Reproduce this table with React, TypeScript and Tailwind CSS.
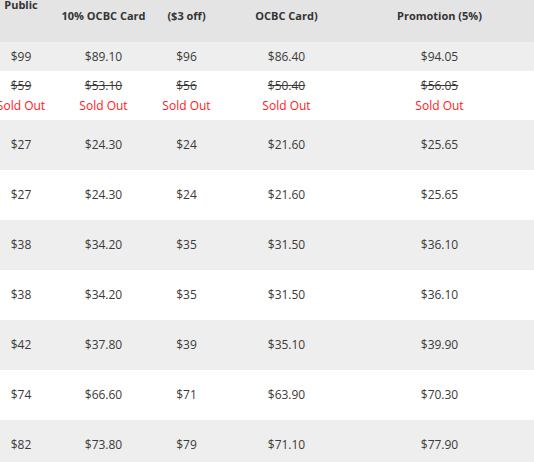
import React from 'react'

type Row = { prices: string[]; soldOut?: boolean; gray: boolean; h: string }

const rows: Row[] = [
  { prices: ['$99', '$89.10', '$96', '$86.40', '$94.05'], gray: true, h: 'h-[29px]' },
  { prices: ['$59', '$53.10', '$56', '$50.40', '$56.05'], soldOut: true, gray: false, h: 'h-[49px]' },
  { prices: ['$27', '$24.30', '$24', '$21.60', '$25.65'], gray: true, h: 'h-[50px]' },
  { prices: ['$27', '$24.30', '$24', '$21.60', '$25.65'], gray: false, h: 'h-[50px]' },
  { prices: ['$38', '$34.20', '$35', '$31.50', '$36.10'], gray: true, h: 'h-[50px]' },
  { prices: ['$38', '$34.20', '$35', '$31.50', '$36.10'], gray: false, h: 'h-[50px]' },
  { prices: ['$42', '$37.80', '$39', '$35.10', '$39.90'], gray: true, h: 'h-[50px]' },
  { prices: ['$74', '$66.60', '$71', '$63.90', '$70.30'], gray: false, h: 'h-[50px]' },
  { prices: ['$82', '$73.80', '$79', '$71.10', '$77.90'], gray: true, h: 'h-[50px]' },
]

const cols = 'grid grid-cols-[82px_83px_83px_117px_189px]'

export default function App() {
  return (
    <div className="w-[534px] h-[462px] overflow-hidden bg-white font-['Open_Sans',sans-serif] text-[12px] text-[#3a3a3a]">
      <div className="-ml-[20px] w-[554px]">
        <div className={`${cols} grid-rows-[42px] h-[42px] overflow-hidden bg-[#e4e4e4] font-bold text-[11px] text-[#333] leading-[18px] whitespace-nowrap`}>
          <div className="flex flex-col justify-end items-center min-h-0 pb-[28px]">Public</div>
          <div className="flex flex-col justify-end items-center min-h-0 pb-[17px]">10% OCBC Card</div>
          <div className="flex flex-col justify-end items-center min-h-0 pb-[17px]">($3 off)</div>
          <div className="flex flex-col justify-end items-center min-h-0 pb-[17px]">OCBC Card)</div>
          <div className="flex flex-col justify-end items-center min-h-0 pb-[17px]">Promotion (5%)</div>
        </div>
        {rows.map((r, i) => (
          <div key={i} className={`${cols} ${r.h} ${r.gray ? 'bg-[#eeeeee]' : 'bg-white'}`}>
            {r.prices.map((p, j) => (
              <div key={j} className="flex flex-col items-center justify-center leading-[20px] whitespace-nowrap">
                {r.soldOut ? (
                  <>
                    <span className="line-through">{p}</span>
                    <span className="text-[#ff1a1a]">Sold Out</span>
                  </>
                ) : (
                  <span>{p}</span>
                )}
              </div>
            ))}
          </div>
        ))}
      </div>
    </div>
  )
}
